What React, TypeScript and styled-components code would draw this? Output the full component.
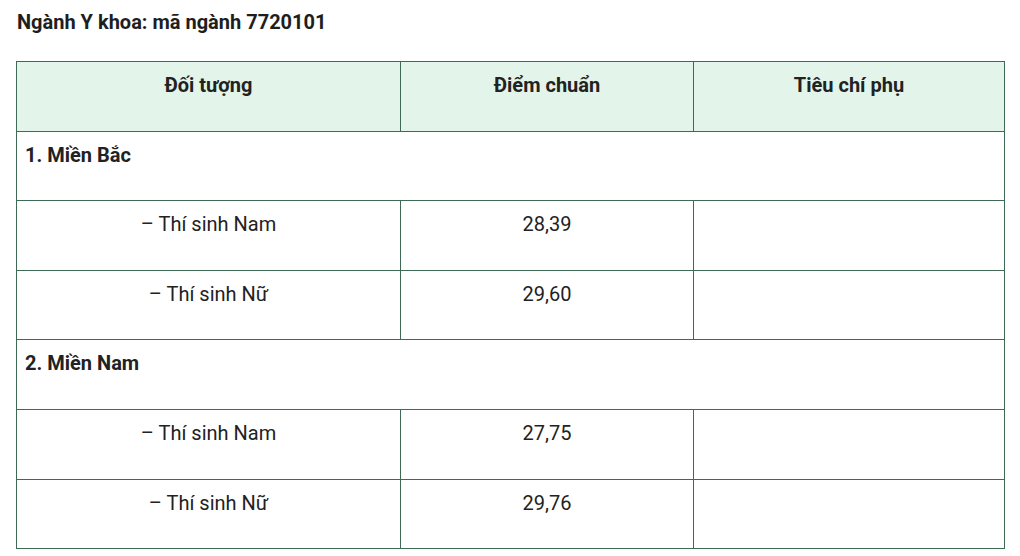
import React from 'react'
import styled, { createGlobalStyle } from 'styled-components'

const GlobalStyle = createGlobalStyle`
  html, body {
    margin: 0;
    padding: 0;
    background: #fff;
  }

  body {
    font-family: Roboto, 'Liberation Sans', sans-serif;
    color: #222;
  }
`

const Page = styled.div`
  padding: 9px 16px 0 16px;
  width: 988px;
`

const Title = styled.h3`
  margin: 0 0 26px 1px;
  font-size: 20px;
  line-height: 26px;
  font-weight: 700;
  color: #1e1e1e;
`

const Table = styled.table`
  width: 988px;
  border-collapse: collapse;
  table-layout: fixed;
  font-size: 20px;
  line-height: 28px;
`

const Cell = styled.td<{ header?: boolean; section?: boolean }>`
  height: 69.6px;
  box-sizing: border-box;
  padding: 9px 8px 0 8px;
  vertical-align: top;
  border: 1.5px solid #3f6a55;
  text-align: ${(p) => (p.section ? 'left' : 'center')};
  font-weight: ${(p) => (p.header || p.section ? 700 : 400)};
  background: ${(p) => (p.header ? '#e3f5ea' : '#fff')};
  color: #222;
`

interface Group {
  name: string
  rows: { label: string; score: string }[]
}

const groups: Group[] = [
  {
    name: '1. Miền Bắc',
    rows: [
      { label: '– Thí sinh Nam', score: '28,39' },
      { label: '– Thí sinh Nữ', score: '29,60' },
    ],
  },
  {
    name: '2. Miền Nam',
    rows: [
      { label: '– Thí sinh Nam', score: '27,75' },
      { label: '– Thí sinh Nữ', score: '29,76' },
    ],
  },
]

export default function App() {
  return (
    <>
      <GlobalStyle />
      <Page>
        <Title>Ngành Y khoa: mã ngành 7720101</Title>

        <Table>
          <colgroup>
            <col style={{ width: 384 }} />
            <col style={{ width: 293 }} />
            <col style={{ width: 311 }} />
          </colgroup>
          <thead>
            <tr>
              <Cell as="th" header>
                Đối tượng
              </Cell>
              <Cell as="th" header>
                Điểm chuẩn
              </Cell>
              <Cell as="th" header>
                Tiêu chí phụ
              </Cell>
            </tr>
          </thead>
          <tbody>
            {groups.map((g) => (
              <React.Fragment key={g.name}>
                <tr>
                  <Cell section colSpan={3}>
                    {g.name}
                  </Cell>
                </tr>
                {g.rows.map((r) => (
                  <tr key={r.label}>
                    <Cell>{r.label}</Cell>
                    <Cell>{r.score}</Cell>
                    <Cell />
                  </tr>
                ))}
              </React.Fragment>
            ))}
          </tbody>
        </Table>
      </Page>
    </>
  )
}
